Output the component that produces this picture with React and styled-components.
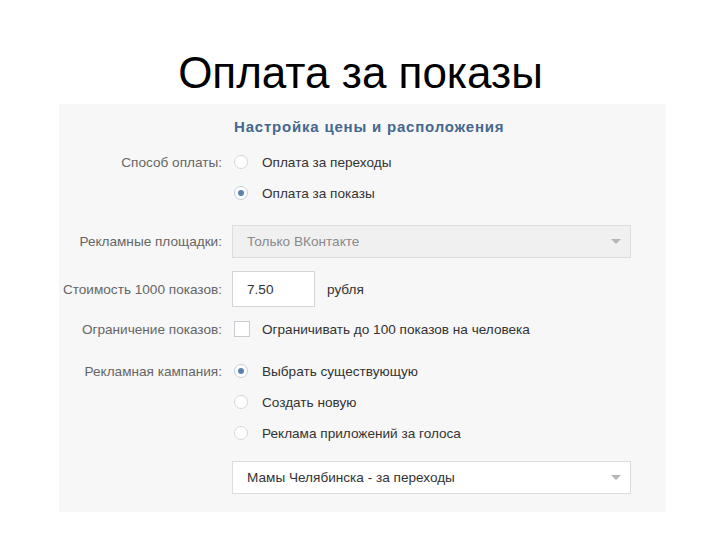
import React from 'react'
import styled, { createGlobalStyle } from 'styled-components'

const GlobalStyle = createGlobalStyle`
  html, body {
    margin: 0;
    padding: 0;
    background: #fff;
  }
  body {
    font-family: 'Liberation Sans', Arial, sans-serif;
  }
`

const Page = styled.div`
  width: 720px;
  height: 540px;
  overflow: hidden;
  padding-top: 48px;
  box-sizing: border-box;
`

const Title = styled.h1`
  margin: 0;
  font-family: 'Liberation Sans', Arial, sans-serif;
  font-weight: normal;
  font-size: 44px;
  line-height: 50px;
  color: #000;
  text-align: center;
  padding-left: 1px;
`

const Panel = styled.div`
  margin: 6px 0 0 59px;
  width: 607px;
  box-sizing: border-box;
  background: #f7f7f7;
  padding: 15px 35px 18px 0;
  display: flex;
  flex-direction: column;
  font-size: 13.6px;
`

const Heading = styled.div`
  margin-left: 175px;
  font-size: 15px;
  letter-spacing: 0.8px;
  font-weight: bold;
  line-height: 16px;
  color: #45688e;
`

const Row = styled.div`
  display: grid;
  grid-template-columns: 163px 1fr;
  column-gap: 11px;
  align-items: center;
  min-height: 24px;
  margin-top: ${(p) => p.$top || 0}px;
`

const Label = styled.div`
  text-align: right;
  color: #666;
  white-space: nowrap;
`

const Option = styled.label`
  display: flex;
  align-items: center;
  gap: 14px;
  color: #333;
  white-space: nowrap;
`

const Radio = styled.span`
  width: 14px;
  height: 14px;
  border-radius: 50%;
  box-sizing: border-box;
  border: 1px solid ${(p) => (p.$on ? '#c3d0de' : '#d3d7dc')};
  background: #fff;
  display: inline-flex;
  justify-content: center;
  align-items: center;
  margin-left: 1px;
  &::after {
    content: '';
    width: 6px;
    height: 6px;
    border-radius: 50%;
    background: ${(p) => (p.$on ? '#5b82ae' : 'transparent')};
  }
`

const Check = styled.span`
  width: 16px;
  height: 16px;
  box-sizing: border-box;
  border: 1px solid #c7ccd2;
  background: #fff;
  margin-left: 1px;
  margin-right: -2px;
`

const Select = styled.div`
  height: 33px;
  box-sizing: border-box;
  border: 1px solid #dcdcdc;
  background: ${(p) => (p.$disabled ? '#f0f0f0' : '#fff')};
  color: ${(p) => (p.$disabled ? '#8a8a8a' : '#333')};
  display: flex;
  align-items: center;
  justify-content: space-between;
  padding: 0 9px 0 14px;
  margin-left: -1px;
`

const Arrow = styled.span`
  width: 0;
  height: 0;
  border-left: 5px solid transparent;
  border-right: 5px solid transparent;
  border-top: 5px solid #b5b5b5;
`

const Inline = styled.div`
  display: flex;
  align-items: center;
  gap: 12px;
`

const Input = styled.div`
  width: 83px;
  height: 36px;
  box-sizing: border-box;
  border: 1px solid #d5d5d5;
  background: #fff;
  color: #333;
  display: flex;
  align-items: center;
  padding-left: 14px;
  margin-left: -1px;
`

const Unit = styled.span`
  color: #333;
`

const RadioOption = ({ on, children }) => (
  <Option>
    <Radio $on={on} />
    {children}
  </Option>
)

export default function App() {
  return (
    <Page>
      <GlobalStyle />
      <Title>Оплата за показы</Title>
      <Panel>
        <Heading>Настройка цены и расположения</Heading>
        <Row $top={15}>
          <Label>Способ оплаты:</Label>
          <RadioOption>Оплата за переходы</RadioOption>
        </Row>
        <Row $top={7}>
          <span />
          <RadioOption on>Оплата за показы</RadioOption>
        </Row>
        <Row $top={20}>
          <Label>Рекламные площадки:</Label>
          <Select $disabled>
            Только ВКонтакте
            <Arrow />
          </Select>
        </Row>
        <Row $top={13}>
          <Label>Стоимость 1000 показов:</Label>
          <Inline>
            <Input>7.50</Input>
            <Unit>рубля</Unit>
          </Inline>
        </Row>
        <Row $top={10}>
          <Label>Ограничение показов:</Label>
          <Option>
            <Check />
            Ограничивать до 100 показов на человека
          </Option>
        </Row>
        <Row $top={18}>
          <Label>Рекламная кампания:</Label>
          <RadioOption on>Выбрать существующую</RadioOption>
        </Row>
        <Row $top={7}>
          <span />
          <RadioOption>Создать новую</RadioOption>
        </Row>
        <Row $top={7}>
          <span />
          <RadioOption>Реклама приложений за голоса</RadioOption>
        </Row>
        <Row $top={16}>
          <span />
          <Select>
            Мамы Челябинска - за переходы
            <Arrow />
          </Select>
        </Row>
      </Panel>
    </Page>
  )
}
